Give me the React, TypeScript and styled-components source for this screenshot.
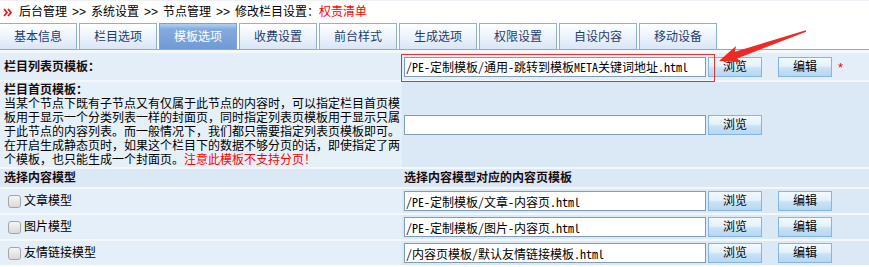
import React from "react";
import styled, { createGlobalStyle } from "styled-components";

const GlobalStyle = createGlobalStyle`
  html, body { margin: 0; padding: 0; background: #fff; }
  body {
    font-family: "Liberation Sans", "Noto Sans CJK SC", sans-serif;
    font-size: 12px;
    color: #000;
    overflow: hidden;
  }
`;

const MONO = `"Noto Sans Mono CJK SC", "Noto Sans CJK SC", monospace`;

const Page = styled.div`
  position: relative;
  width: 869px;
  height: 267px;
  overflow: hidden;
`;

const Breadcrumb = styled.div`
  height: 22px;
  border-top: 1px solid #edf2f8;
  display: flex;
  align-items: center;
  padding-left: 3px;
  white-space: nowrap;
  line-height: 14px;
`;

const CrumbIcon = styled.svg`
  width: 9px;
  height: 9px;
  margin-right: 7px;
  flex: none;
`;

const Sep = styled.span`
  display: inline-block;
  width: 24px;
  text-align: center;
`;

const Red = styled.span`
  color: #f00;
`;

const TabBar = styled.div`
  display: flex;
  gap: 2px;
  height: 26px;
  margin-left: -1px;
  border-bottom: 1px solid #86aadb;
`;

const Tab = styled.div<{ $active?: boolean }>`
  width: 78px;
  height: 26px;
  box-sizing: border-box;
  border: 1px solid ${(p) => (p.$active ? "#7aa2d8" : "#8cb0de")};
  border-bottom: none;
  display: flex;
  align-items: center;
  justify-content: center;
  padding-top: 1px;
  line-height: 14px;
  background: ${(p) =>
    p.$active
      ? "linear-gradient(#b3cdee 0px, #a4c3ea 2px, #84abe0 5px, #6f9ad5 100%)"
      : "linear-gradient(#ffffff 0%, #f2f7fd 35%, #d8e6f8 100%)"};
  color: ${(p) => (p.$active ? "#ffffff" : "#1d3c6e")};
`;

const Table = styled.div`
  display: flex;
  flex-direction: column;
  gap: 2px;
  padding-top: 3px;
  background: #f4f8fc;
`;

const Row = styled.div<{ $h: number }>`
  display: grid;
  grid-template-columns: 402px 1fr;
  height: ${(p) => p.$h}px;
`;

const Cell = styled.div<{ $bg: string; $top?: boolean }>`
  background: ${(p) => p.$bg};
  display: flex;
  flex-direction: ${(p) => (p.$top ? "column" : "row")};
  align-items: ${(p) => (p.$top ? "flex-start" : "center")};
  padding-left: 4px;
  padding-top: ${(p) => (p.$top ? "1px" : "0")};
  white-space: nowrap;
  line-height: 14px;
  overflow: hidden;
`;

const FieldCell = styled.div<{ $bg: string }>`
  background: ${(p) => p.$bg};
  display: flex;
  align-items: center;
  padding-left: 2px;
  white-space: nowrap;
  line-height: 14px;
`;

const Label = styled.span`
  font-weight: bold;
  color: #1a0c0c;
`;

const DescLine = styled.span`
  display: block;
  height: 14px;
  color: #000;
`;

const CheckCell = styled.label`
  background: #e5eff9;
  display: flex;
  align-items: center;
  gap: 3px;
  padding-left: 8px;
  line-height: 14px;
  white-space: nowrap;
`;

const Check = styled.input`
  appearance: none;
  -webkit-appearance: none;
  margin: 0;
  width: 13px;
  height: 13px;
  box-sizing: border-box;
  border: 1px solid #a5a5a5;
  border-radius: 3px;
  background: linear-gradient(#f5f5f5, #d9d9d9);
`;

const TextInput = styled.input`
  width: 302px;
  height: 20px;
  box-sizing: border-box;
  margin: 0;
  border: 1px solid #7f9db9;
  background: #fff;
  padding: 0 1px;
  font-family: ${MONO};
  font-size: 12px;
  color: #000;
  outline: none;
`;

const Btn = styled.button<{ $gap: number }>`
  width: 54px;
  height: 20px;
  box-sizing: border-box;
  margin: 0 0 0 ${(p) => p.$gap}px;
  padding: 0;
  border: 1px solid #86b6e0;
  background: linear-gradient(#f2f9fe 0%, #e4f2fc 45%, #c9e2f6 55%, #b7d7f1 100%);
  font-family: "Liberation Sans", "Noto Sans CJK SC", sans-serif;
  font-size: 12px;
  line-height: 14px;
  color: #000;
`;

const Star = styled.span`
  color: #f00;
  margin-left: 6px;
  font-size: 13px;
  padding-top: 2px;
`;

const Overlay = styled.svg`
  position: absolute;
  left: 0;
  top: 0;
  width: 869px;
  height: 267px;
  pointer-events: none;
`;

const tabs = ["基本信息", "栏目选项", "模板选项", "收费设置", "前台样式", "生成选项", "权限设置", "自设内容", "移动设备"];

const models = [
  { name: "文章模型", path: "/PE-定制模板/文章-内容页.html" },
  { name: "图片模型", path: "/PE-定制模板/图片-内容页.html" },
  { name: "友情链接模型", path: "/内容页模板/默认友情链接模板.html" },
];

const ROW_BG = "#e3eef8";
const LEFT_BG = "#e6f0f9";
const RIGHT_BG = "#dbe8f5";

export default function App() {
  return (
    <Page>
      <GlobalStyle />
      <Breadcrumb>
        <CrumbIcon viewBox="0 0 9 9">
          <path d="M1 1 L4 4.5 L1 8" fill="none" stroke="#e01818" strokeWidth="1.8" />
          <path d="M5 1 L8 4.5 L5 8" fill="none" stroke="#e01818" strokeWidth="1.8" />
        </CrumbIcon>
        后台管理<Sep>&gt;&gt;</Sep>系统设置<Sep>&gt;&gt;</Sep>节点管理<Sep>&gt;&gt;</Sep>修改栏目设置：<Red>权责清单</Red>
      </Breadcrumb>
      <TabBar>
        {tabs.map((t, i) => (
          <Tab key={t} $active={i === 2}>
            {t}
          </Tab>
        ))}
      </TabBar>
      <Table>
        <Row $h={27}>
          <Cell $bg={ROW_BG}>
            <Label>栏目列表页模板：</Label>
          </Cell>
          <FieldCell $bg={ROW_BG}>
            <TextInput readOnly value="/PE-定制模板/通用-跳转到模板META关键词地址.html" />
            <Btn $gap={2}>浏览</Btn>
            <Btn $gap={16}>编辑</Btn>
            <Star>*</Star>
          </FieldCell>
        </Row>
        <Row $h={85}>
          <Cell $bg={LEFT_BG} $top>
            <Label>栏目首页模板：</Label>
            <DescLine>当某个节点下既有子节点又有仅属于此节点的内容时，可以指定栏目首页模</DescLine>
            <DescLine>板用于显示一个分类列表一样的封面页，同时指定列表页模板用于显示只属</DescLine>
            <DescLine>于此节点的内容列表。而一般情况下，我们都只需要指定列表页模板即可。</DescLine>
            <DescLine>在开启生成静态页时，如果这个栏目下的数据不够分页的话，即使指定了两</DescLine>
            <DescLine>
              个模板，也只能生成一个封面页。<Red>注意此模板不支持分页！</Red>
            </DescLine>
          </Cell>
          <FieldCell $bg={RIGHT_BG}>
            <TextInput readOnly value="" />
            <Btn $gap={2}>浏览</Btn>
          </FieldCell>
        </Row>
        <Row $h={18}>
          <Cell $bg={RIGHT_BG}>
            <Label>选择内容模型</Label>
          </Cell>
          <FieldCell $bg={RIGHT_BG}>
            <Label>选择内容模型对应的内容页模板</Label>
          </FieldCell>
        </Row>
        {models.map((m) => (
          <Row $h={24} key={m.name}>
            <CheckCell>
              <Check type="checkbox" />
              {m.name}
            </CheckCell>
            <FieldCell $bg={RIGHT_BG}>
              <TextInput readOnly value={m.path} />
              <Btn $gap={2}>浏览</Btn>
              <Btn $gap={16}>编辑</Btn>
            </FieldCell>
          </Row>
        ))}
      </Table>
      <Overlay viewBox="0 0 869 267">
        <rect x="401.5" y="54.5" width="313" height="27" fill="none" stroke="#e8312f" strokeWidth="1" />
        <polygon
          points="805.8,30.3 734.8,51.8 736.0,46.0 719,61 741.6,62.2 737.2,58.4 806.2,31.7"
          fill="#ee2a24"
        />
      </Overlay>
    </Page>
  );
}
